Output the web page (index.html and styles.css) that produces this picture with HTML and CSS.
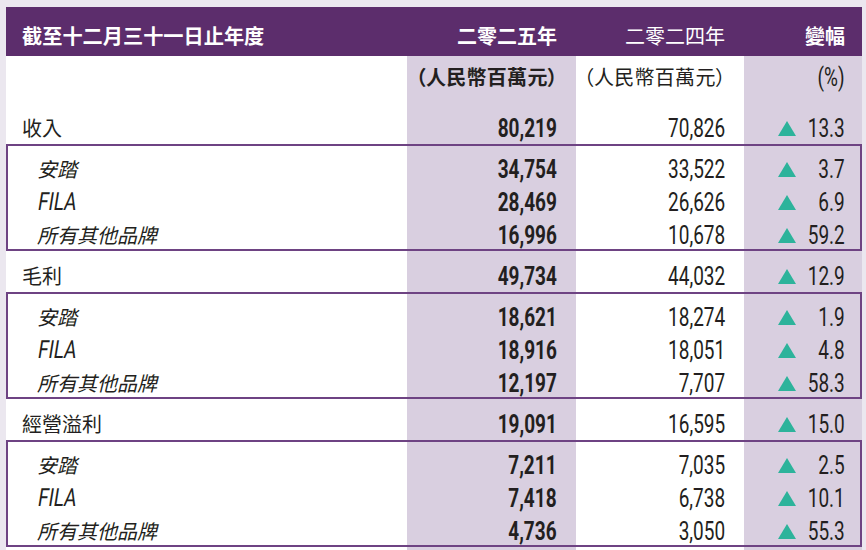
FILE: index.html
```html
<!DOCTYPE html>
<html lang="zh-Hant">
<head>
<meta charset="utf-8">
<title>財務摘要</title>
<link rel="stylesheet" href="styles.css">
</head>
<body>
<div class="sheet">
  <div class="row head">
    <div class="lab">截至十二月三十一日止年度</div>
    <div class="hv b">二零二五年</div>
    <div class="hv">二零二四年</div>
    <div class="hc b">變幅</div>
  </div>
  <div class="row unit">
    <div class="lab"></div>
    <div class="uv b">（人民幣百萬元）</div>
    <div class="uv">（人民幣百萬元）</div>
    <div class="uc"><span>(%)</span></div>
  </div>

  <div class="row main">
    <div class="lab">收入</div>
    <div class="num b"><span>80,219</span></div>
    <div class="num"><span>70,826</span></div>
    <div class="chg"><i class="tri"></i><span class="val">13.3</span></div>
  </div>
  <div class="group">
    <div class="row sub">
      <div class="lab">安踏</div>
      <div class="num b"><span>34,754</span></div>
      <div class="num"><span>33,522</span></div>
      <div class="chg"><i class="tri"></i><span class="val">3.7</span></div>
    </div>
    <div class="row sub">
      <div class="lab"><span class="lat">FILA</span></div>
      <div class="num b"><span>28,469</span></div>
      <div class="num"><span>26,626</span></div>
      <div class="chg"><i class="tri"></i><span class="val">6.9</span></div>
    </div>
    <div class="row sub">
      <div class="lab">所有其他品牌</div>
      <div class="num b"><span>16,996</span></div>
      <div class="num"><span>10,678</span></div>
      <div class="chg"><i class="tri"></i><span class="val">59.2</span></div>
    </div>
  </div>

  <div class="row main">
    <div class="lab">毛利</div>
    <div class="num b"><span>49,734</span></div>
    <div class="num"><span>44,032</span></div>
    <div class="chg"><i class="tri"></i><span class="val">12.9</span></div>
  </div>
  <div class="group">
    <div class="row sub">
      <div class="lab">安踏</div>
      <div class="num b"><span>18,621</span></div>
      <div class="num"><span>18,274</span></div>
      <div class="chg"><i class="tri"></i><span class="val">1.9</span></div>
    </div>
    <div class="row sub">
      <div class="lab"><span class="lat">FILA</span></div>
      <div class="num b"><span>18,916</span></div>
      <div class="num"><span>18,051</span></div>
      <div class="chg"><i class="tri"></i><span class="val">4.8</span></div>
    </div>
    <div class="row sub">
      <div class="lab">所有其他品牌</div>
      <div class="num b"><span>12,197</span></div>
      <div class="num"><span>7,707</span></div>
      <div class="chg"><i class="tri"></i><span class="val">58.3</span></div>
    </div>
  </div>

  <div class="row main">
    <div class="lab">經營溢利</div>
    <div class="num b"><span>19,091</span></div>
    <div class="num"><span>16,595</span></div>
    <div class="chg"><i class="tri"></i><span class="val">15.0</span></div>
  </div>
  <div class="group">
    <div class="row sub">
      <div class="lab">安踏</div>
      <div class="num b"><span>7,211</span></div>
      <div class="num"><span>7,035</span></div>
      <div class="chg"><i class="tri"></i><span class="val">2.5</span></div>
    </div>
    <div class="row sub">
      <div class="lab"><span class="lat">FILA</span></div>
      <div class="num b"><span>7,418</span></div>
      <div class="num"><span>6,738</span></div>
      <div class="chg"><i class="tri"></i><span class="val">10.1</span></div>
    </div>
    <div class="row sub">
      <div class="lab">所有其他品牌</div>
      <div class="num b"><span>4,736</span></div>
      <div class="num"><span>3,050</span></div>
      <div class="chg"><i class="tri"></i><span class="val">55.3</span></div>
    </div>
  </div>
</div>
</body>
</html>
```

FILE: styles.css
```css
html, body {
  margin: 0;
  padding: 0;
}

body {
  background: #ebe7ef;
  color: #231f20;
  font-family: "Noto Sans CJK TC", "Noto Sans CJK SC", sans-serif;
}

.sheet {
  margin: 7px 4px 0 6px;
  width: 856px;
  padding-bottom: 12px;
  background: linear-gradient(to right,
    #ffffff 0, #ffffff 401px,
    #d9cfe0 401px, #d9cfe0 570px,
    #ffffff 570px, #ffffff 738px,
    #d9cfe0 738px, #d9cfe0 100%);
}

.row {
  display: grid;
  grid-template-columns: 401px 169px 168px 118px;
}

/* header band */
.head {
  background: #5c2d6c;
  color: #ffffff;
  box-sizing: border-box;
  height: 49px;
  padding-top: 14px;
  font-size: 20px;
  line-height: 30px;
}

.head .lab {
  font-weight: 700;
  line-height: 30px;
  font-size: 20.2px;
}

.hv {
  text-align: right;
  padding-right: 19px;
}

.hc {
  text-align: right;
  padding-right: 17px;
}

.b {
  font-weight: 700;
}

/* unit row */
.unit {
  box-sizing: border-box;
  height: 47px;
  padding-top: 4px;
}

.uv {
  text-align: right;
  padding-right: 18px;
  font-size: 20px;
  line-height: 33px;
  font-feature-settings: "palt";
  letter-spacing: 0.3px;
}

.uc {
  text-align: right;
  padding-right: 17px;
  font-family: Roboto, "Liberation Sans", sans-serif;
  font-size: 25px;
  line-height: 31px;
  padding-top: 2px;
}

.uc span {
  display: inline-block;
  transform: scaleX(0.76);
  transform-origin: 100% 50%;
}

/* rows */
.main {
  box-sizing: border-box;
  height: 41px;
  padding-top: 8px;
}

.sub {
  height: 33px;
}

.group {
  position: relative;
  padding-top: 8px;
}

.group::after {
  content: "";
  position: absolute;
  inset: 0;
  border: 2px solid #6e4383;
  pointer-events: none;
}

.lab {
  padding-left: 16px;
  font-size: 20px;
  line-height: 33px;
  white-space: nowrap;
}

.sub .lab {
  padding-left: 31px;
  font-style: italic;
}

.lat {
  display: inline-block;
  font-family: Roboto, "Liberation Sans", sans-serif;
  font-size: 25px;
  font-style: normal;
  transform: scaleX(0.76) skewX(-12deg);
  transform-origin: 0 75%;
}

.num {
  text-align: right;
  padding-right: 19px;
  padding-top: 2px;
  font-family: Roboto, "Liberation Sans", sans-serif;
  font-size: 25px;
  line-height: 31px;
}

.num span,
.val {
  display: inline-block;
  transform: scaleX(0.76);
  transform-origin: 100% 50%;
}

.chg {
  display: flex;
  align-items: center;
  padding: 2px 17px 0 34px;
  font-family: Roboto, "Liberation Sans", sans-serif;
  font-size: 25px;
  line-height: 31px;
}

.tri {
  width: 0;
  height: 0;
  border-left: 9.5px solid transparent;
  border-right: 9.5px solid transparent;
  border-bottom: 15px solid #2db39b;
}

.val {
  margin-left: auto;
}
```
